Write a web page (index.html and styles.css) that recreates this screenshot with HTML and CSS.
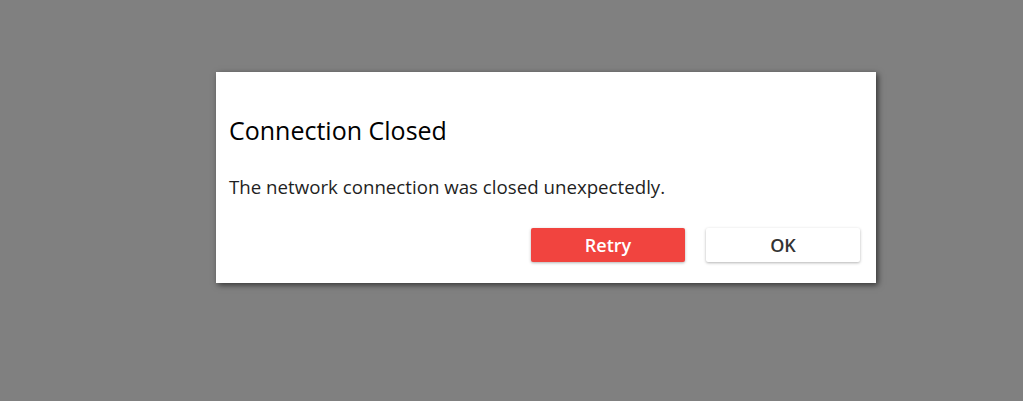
FILE: index.html
```html
<!DOCTYPE html>
<html>
<head>
<meta charset="utf-8">
<link rel="stylesheet" href="styles.css">
</head>
<body>
<div class="screen">
  <div class="dialog">
    <h1 class="title">Connection Closed</h1>
    <p class="message">The network connection was closed unexpectedly.</p>
    <div class="actions">
      <button class="btn btn-primary">Retry</button>
      <button class="btn btn-secondary">OK</button>
    </div>
  </div>
</div>
</body>
</html>
```
FILE: styles.css
```css
html, body {
  margin: 0;
  padding: 0;
  background: #808080;
  width: 1023px;
  height: 401px;
  overflow: hidden;
}
.screen {
  padding: 72px 0 0 216px;
}
.dialog {
  width: 660px;
  height: 211px;
  box-sizing: border-box;
  background: #ffffff;
  box-shadow: 2px 2px 6px rgba(0,0,0,0.6);
  padding: 41px 16px 0 13px;
  display: flex;
  flex-direction: column;
  font-family: "Open Sans", "Noto Sans", sans-serif;
}
.title {
  margin: 0;
  font-weight: 400;
  font-size: 25px;
  line-height: 34px;
  color: #000;
}
.message {
  margin: 28px 0 0 0;
  font-size: 18.7px;
  line-height: 24px;
  color: #1f1f1f;
}
.actions {
  display: flex;
  justify-content: flex-end;
  gap: 21px;
  margin-top: 29px;
}
.btn {
  width: 154px;
  height: 34px;
  border: none;
  border-radius: 2px;
  font-family: "Open Sans", "Noto Sans", sans-serif;
  font-size: 18px;
  font-weight: 600;
  padding: 0;
  box-shadow: 0 1px 3px rgba(0,0,0,0.3);
}
.btn-primary {
  background: #f1443f;
  color: #ffffff;
}
.btn-secondary {
  background: #ffffff;
  color: #333333;
}
```
